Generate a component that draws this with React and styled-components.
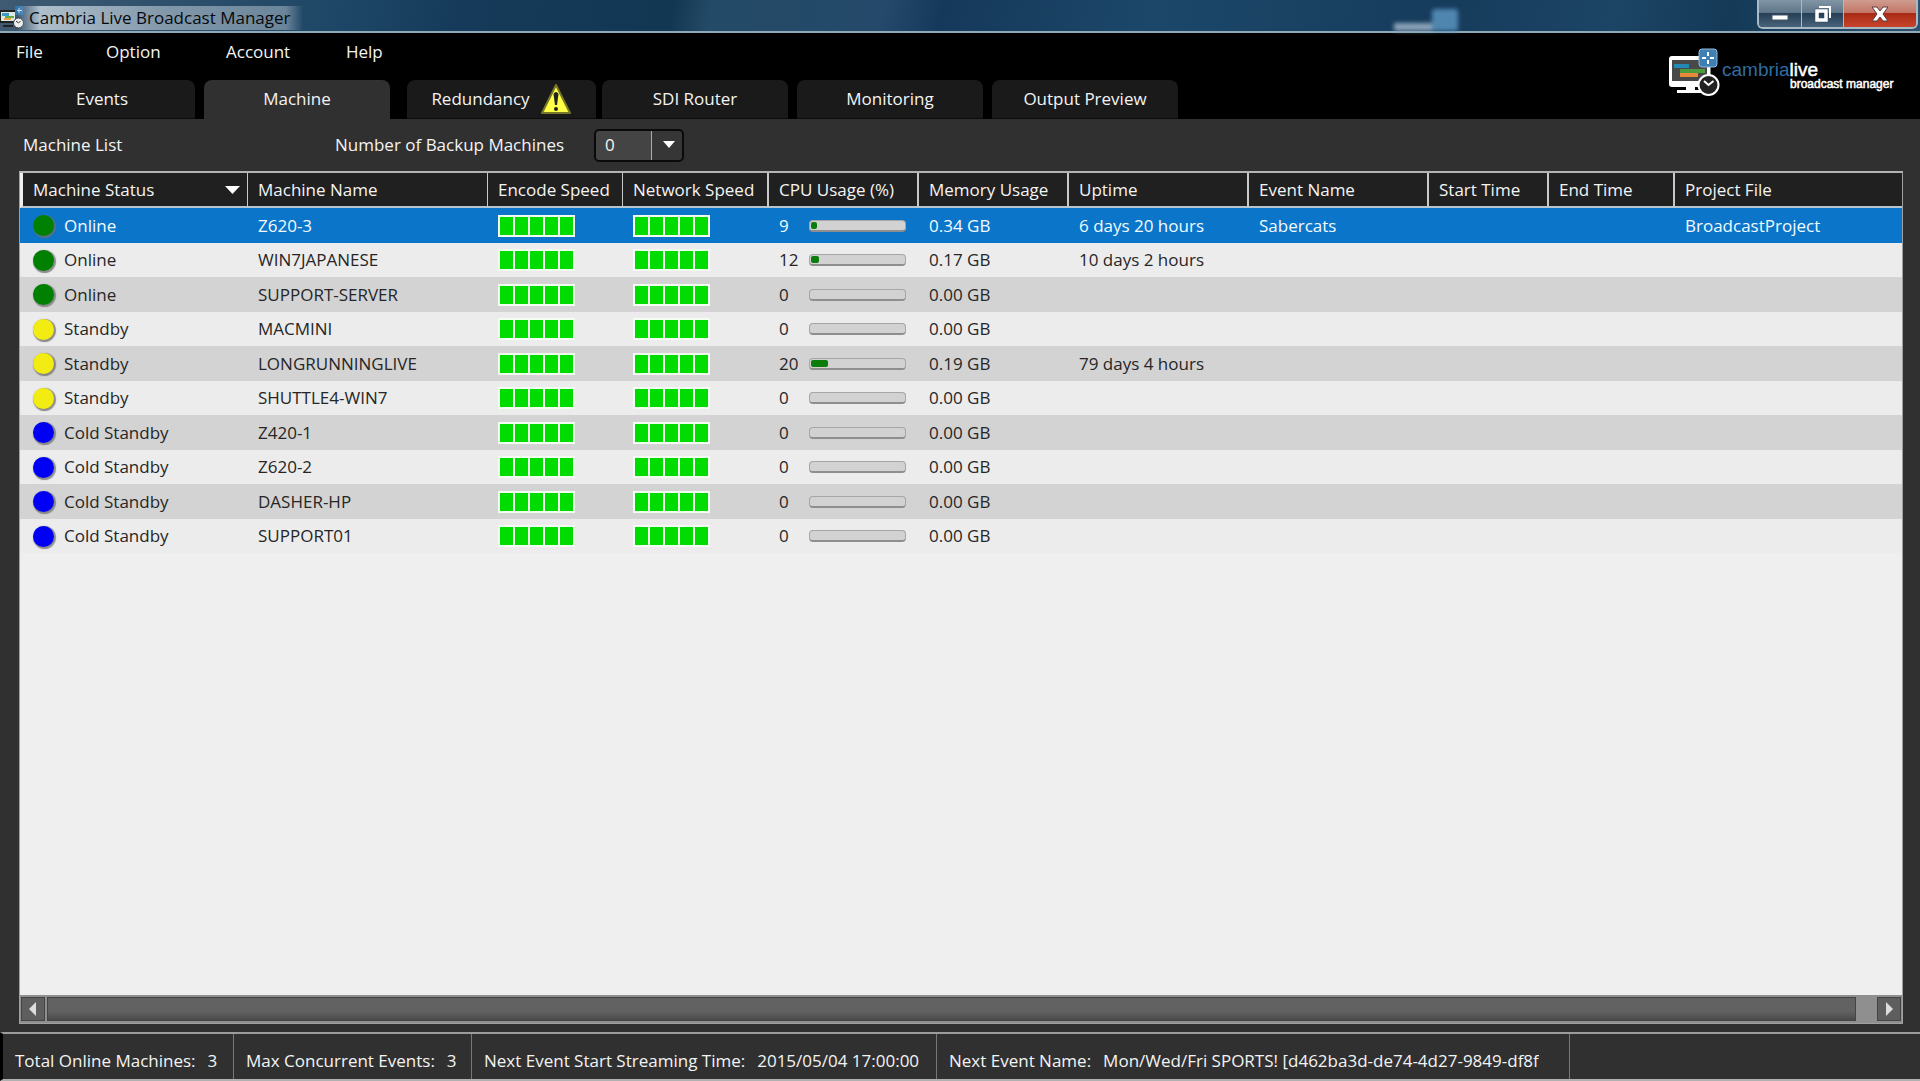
import React from "react";
import styled, { createGlobalStyle, css } from "styled-components";

const Global = createGlobalStyle`
  * { box-sizing: border-box; }
  body {
    margin: 0;
    background: #303030;
    color: #f4f4f4;
    font-family: "Open Sans", "Noto Sans", sans-serif;
    font-size: 17px;
    line-height: 24px;
  }
  button, select { font: inherit; color: inherit; }
`;

const Window = styled.div`
  min-height: 100vh;
  display: flex;
  flex-direction: column;
  overflow: hidden;
`;

/* ---------- title bar ---------- */

const TitleBar = styled.header`
  position: relative;
  display: flex;
  justify-content: space-between;
  height: 33px;
  border-bottom: 2px solid #8fa9b8;
  background: linear-gradient(100deg, #3f5a72 0, #1d4666 18%, #163b5a 24%, #123753 35%, #234a66 37%, #24496a 46%, #15395a 49%, #1c4769 60%, #163c5c 75%, #1c4464 84%, #143a58 90%, #2c5270 100%);
`;

const TitleText = styled.div`
  display: flex;
  align-items: center;
  gap: 5px;
  padding-top: 4px;
  color: #05090d;
`;

const Glow = styled.span`
  margin: 0 -12px;
  padding: 0 12px;
  background: linear-gradient(90deg, rgba(214, 226, 234, 0) 0, rgba(214, 226, 234, 0.75) 8%, rgba(160, 178, 192, 0.75) 50%, rgba(130, 152, 170, 0.75) 94%, rgba(130, 152, 170, 0) 100%);
`;

const GlassReflection = styled.svg`
  position: absolute;
  left: 72.4%;
  bottom: 0;
  filter: blur(2px);
`;

const WindowButtons = styled.div`
  display: flex;
  height: 29px;
  margin-right: 2px;
  border: 2px solid #a9bac6;
  border-top: 0;
  border-radius: 0 0 6px 6px;
  overflow: hidden;
`;

const WindowButton = styled.button`
  display: flex;
  align-items: center;
  justify-content: center;
  width: ${(p) => (p.$close ? 73 : 42)}px;
  padding: 0;
  border: 0;
  border-left: ${(p) => (p.$first ? "0" : "1px solid #a9bac6")};
  background: ${(p) =>
    p.$close
      ? "linear-gradient(#cf9c90 0, #c27565 48%, #a82a15 50%, #c8452c 100%)"
      : "linear-gradient(#8195a5 0, #5f7689 48%, #243f56 50%, #49647a 100%)"};
`;

/* ---------- menu, tabs, brand ---------- */

const TopArea = styled.div`
  display: flex;
  justify-content: space-between;
  height: 86px;
  background: #000;
`;

const Nav = styled.div`
  display: flex;
  flex-direction: column;
  justify-content: space-between;
`;

const MenuBar = styled.nav`
  display: flex;
  padding: 7px 0 0 16px;
`;

const MenuButton = styled.button`
  width: ${(p) => p.$width}px;
  padding: 0;
  border: 0;
  background: none;
  text-align: left;
`;

const TabList = styled.div`
  display: flex;
  gap: 9px;
  padding-left: 9px;
`;

const Tab = styled.button`
  display: flex;
  align-items: center;
  justify-content: center;
  gap: 10px;
  width: 186px;
  height: 39px;
  padding: 0;
  border: 0;
  border-bottom: 1px solid #0c0c0c;
  border-radius: 8px 8px 0 0;
  background: #1a1a1a;
  ${(p) => p.$active && css`background: #303030; border-bottom-color: #303030;`}
  ${(p) => p.$alert && css`width: 189px; margin: 0 -3px 0 8px;`}
`;

const Brand = styled.div`
  display: flex;
  gap: 2px;
  width: 252px;
  padding-top: 14px;
  font-family: "Liberation Sans", Arial, sans-serif;
`;

const BrandText = styled.div`
  display: flex;
  flex-direction: column;
  padding-top: 15px;
`;

const BrandName = styled.div`
  font-size: 19px;
  line-height: 16px;
  color: #2f6da3;
  span { color: #fff; -webkit-text-stroke: 0.5px #fff; }
`;

const BrandSub = styled.div`
  padding-left: 68px;
  font-size: 12px;
  line-height: 12px;
  white-space: nowrap;
  color: #fff;
  -webkit-text-stroke: 0.5px #fff;
`;

/* ---------- machine panel ---------- */

const Panel = styled.main`
  flex: 1;
  display: flex;
  flex-direction: column;
  padding: 9px 17px 8px 19px;
`;

const Toolbar = styled.div`
  display: flex;
  align-items: center;
  height: 34px;
  margin-bottom: 9px;
  padding-left: 4px;
`;

const PanelTitle = styled.h1`
  width: 312px;
  margin: 0;
  font-size: 17px;
  font-weight: 400;
`;

const BackupLabel = styled.label`
  width: 259px;
`;

const SelectBox = styled.div`
  position: relative;
  display: grid;
  width: 90px;
  height: 33px;
`;

const Select = styled.select`
  appearance: none;
  padding: 0 9px;
  border: 2px solid #0a0a0a;
  border-radius: 5px;
  background: linear-gradient(90deg, #444 0 55px, #aaa 55px 56px, #363636 56px);
`;

const SelectArrow = styled.svg`
  position: absolute;
  right: 9px;
  top: 12px;
  pointer-events: none;
`;

const Grid = styled.section`
  flex: 1;
  display: flex;
  flex-direction: column;
  border: 1px solid #a0a0a0;
  border-top: 2px solid #b4b4b4;
  background: #efefef;
`;

const TableArea = styled.div`
  flex: 1;
  overflow: hidden;
`;

const Table = styled.table`
  width: 100%;
  table-layout: fixed;
  border-collapse: separate;
  border-spacing: 0;
`;

const HeadCell = styled.th`
  height: 35px;
  padding: 0 0 0 10px;
  border-bottom: 2px solid #b8c4cc;
  border-right: ${(p) => (p.$last ? 0 : p.$thin ? 1 : 2)}px solid #c8c8c8;
  border-left: ${(p) => (p.$first ? "3px solid #eee" : "0")};
  background: #202020;
  font-weight: 400;
  text-align: left;
  white-space: nowrap;
`;

const HeadContent = styled.div`
  display: flex;
  align-items: center;
  justify-content: space-between;
  padding-right: 7px;
`;

const Row = styled.tr`
  height: 34px;
  background: #ececec;
  color: #262626;
  &:nth-child(odd) { height: 35px; background: #d3d3d3; }
  &&[aria-selected="true"] { background: #0a75c9; color: #f2fbff; }
`;

const Cell = styled.td`
  padding: 0 0 0 ${(p) => (p.$first ? 13 : 10)}px;
  white-space: nowrap;
`;

const Inline = styled.div`
  display: flex;
  align-items: center;
`;

const StatusDot = styled.span`
  width: 21px;
  height: 21px;
  margin-right: 10px;
  border-radius: 50%;
  background: ${(p) => p.$color};
  box-shadow: 1px 1px 1px 1px rgba(110, 110, 110, 0.75);
`;

const Speed = styled.div`
  display: grid;
  grid-template-columns: repeat(5, 13px);
  gap: 2px;
  width: 77px;
  height: 22px;
  padding: 2px;
  background: #f2fff0;
`;

const SpeedCell = styled.span`
  background: #00dc00;
`;

const CpuValue = styled.span`
  width: 30px;
`;

const CpuTrack = styled.div`
  width: 97px;
  height: 12px;
  padding: 1px;
  border: 1px solid #a6a6a6;
  border-bottom: 2px solid #8e8e8e;
  border-radius: 4px;
  background: #d2d2d2;
`;

const CpuFill = styled.div`
  height: 100%;
  border-radius: 2px;
  background: #0a7d0a;
`;

const ScrollBar = styled.div`
  display: flex;
  gap: 2px;
  height: 28px;
  padding: 2px 1px;
  background: #8f8f8f;
`;

const ScrollButton = styled.button`
  display: flex;
  align-items: center;
  justify-content: center;
  width: 24px;
  padding: 0;
  border: 1px solid #444;
  background: #5e5e5e;
`;

const ScrollTrack = styled.div`
  flex: 1;
  padding-right: 19px;
`;

const ScrollThumb = styled.div`
  height: 100%;
  border: 1px solid #444;
  background: linear-gradient(#626262 0 60%, #4a4a4a);
`;

/* ---------- status bar ---------- */

const StatusBar = styled.footer`
  display: flex;
  height: 49px;
  border-top: 2px solid #9c9c9c;
  border-bottom: 2px solid #b0b0b0;
  border-left: 3px solid #000;
`;

const StatusItem = styled.div`
  display: flex;
  align-items: center;
  gap: 12px;
  width: ${(p) => p.$width}px;
  padding: 8px 15px 0 12px;
  border-right: 1px solid #777;
  white-space: nowrap;
`;

const StatusValue = styled.span`
  overflow: hidden;
`;

/* ---------- drawings ---------- */

const Monitor = ({ size }) => (
  <svg width={size} height={size} viewBox="0 0 52 52" aria-hidden="true">
    <path d="M9 46h26v-3h-8v-4H18v4H9z" fill="#fff" />
    <rect x="1" y="9" width="41" height="31" rx="3" fill="#fff" />
    <rect x="4" y="13" width="35" height="21" fill="#484848" />
    <rect x="6" y="17" width="15" height="4" fill="#2388b5" />
    <rect x="12" y="22" width="25" height="4" fill="#4d9b3f" />
    <rect x="12" y="26" width="18" height="4" fill="#e8893a" />
    <path d="M41 20v8" stroke="#fff" strokeWidth="3" />
    <rect x="31" y="2" width="18" height="18" rx="3" fill="#3f80b4" stroke="#8fb9d8" />
    <path d="M40 5v4M40 13v4M34 11h4M42 11h4" stroke="#fff" strokeWidth="2" />
    <circle cx="40.500" cy="38" r="10" fill="#222" stroke="#fff" strokeWidth="2" />
    <path d="M36 34l4.500 4 5-4" stroke="#fff" strokeWidth="2" fill="none" />
  </svg>
);

const AppIcon = () => (
  <svg width="24" height="26" viewBox="0 0 24 26" aria-hidden="true">
    <path d="M0 5h15v13H0z" fill="#222" />
    <path d="M1 7h14v9H1z" fill="#dfe9e4" />
    <path d="M2 8h7v3H2z" fill="#3c9ac6" />
    <path d="M5 11h9v2H5z" fill="#5fae4b" />
    <path d="M4 13h7v2H4z" fill="#e9a24c" />
    <path d="M3 20h10v2H3z" fill="#222" />
    <rect x="15" y="1" width="8" height="9" rx="1" fill="#2f76ad" />
    <path d="M19 3v5M17 5.500h5" stroke="#cde" />
    <circle cx="18.500" cy="18" r="5" fill="#eee" stroke="#333" />
    <path d="M16 16l2.500 2 2-2" stroke="#333" fill="none" />
  </svg>
);

const Warning = () => (
  <svg width="32" height="34" viewBox="0 0 32 34" aria-hidden="true">
    <path d="M16 3L30 31H2z" fill="#ffff45" stroke="#77772a" strokeWidth="2" strokeLinejoin="round" />
    <path d="M13.500 12q2.500-4 5 0L17 23h-2z" fill="#222" />
    <circle cx="16" cy="27" r="2" fill="#222" />
  </svg>
);

const Triangle = ({ points, width, height, fill = "#fff" }) => (
  <svg width={width} height={height} aria-hidden="true">
    <polygon points={points} fill={fill} />
  </svg>
);

/* ---------- data ---------- */

const MENUS = [["File", 90], ["Option", 120], ["Account", 120], ["Help", 60]];
const TABS = ["Events", "Machine", "Redundancy", "SDI Router", "Monitoring", "Output Preview"];
const COLUMNS = [
  ["Machine Status", 228], ["Machine Name", 240], ["Encode Speed", 135], ["Network Speed", 146],
  ["CPU Usage (%)", 150], ["Memory Usage", 150], ["Uptime", 180], ["Event Name", 180],
  ["Start Time", 120], ["End Time", 126], ["Project File", null],
];
const DOTS = { Online: "#008000", Standby: "#f2ec12", "Cold Standby": "#0000f5" };
const MACHINES = [
  { status: "Online", name: "Z620-3", cpu: 9, fill: 6, memory: "0.34 GB", uptime: "6 days 20 hours", event: "Sabercats", project: "BroadcastProject" },
  { status: "Online", name: "WIN7JAPANESE", cpu: 12, fill: 9, memory: "0.17 GB", uptime: "10 days 2 hours" },
  { status: "Online", name: "SUPPORT-SERVER", cpu: 0, memory: "0.00 GB" },
  { status: "Standby", name: "MACMINI", cpu: 0, memory: "0.00 GB" },
  { status: "Standby", name: "LONGRUNNINGLIVE", cpu: 20, fill: 18, memory: "0.19 GB", uptime: "79 days 4 hours" },
  { status: "Standby", name: "SHUTTLE4-WIN7", cpu: 0, memory: "0.00 GB" },
  { status: "Cold Standby", name: "Z420-1", cpu: 0, memory: "0.00 GB" },
  { status: "Cold Standby", name: "Z620-2", cpu: 0, memory: "0.00 GB" },
  { status: "Cold Standby", name: "DASHER-HP", cpu: 0, memory: "0.00 GB" },
  { status: "Cold Standby", name: "SUPPORT01", cpu: 0, memory: "0.00 GB" },
];
const STATUS = [
  ["Total Online Machines:", "3", 231],
  ["Max Concurrent Events:", "3", 238],
  ["Next Event Start Streaming Time:", "2015/05/04 17:00:00", 465],
  ["Next Event Name:", "Mon/Wed/Fri SPORTS! [d462ba3d-de74-4d27-9849-df8f", 633],
];

const SpeedMeter = () => (
  <Speed>
    {[0, 1, 2, 3, 4].map((i) => <SpeedCell key={i} />)}
  </Speed>
);

const MachineRow = ({ machine, selected }) => (
  <Row aria-selected={selected}>
    <Cell $first>
      <Inline><StatusDot $color={DOTS[machine.status]} />{machine.status}</Inline>
    </Cell>
    <Cell>{machine.name}</Cell>
    <Cell><SpeedMeter /></Cell>
    <Cell><SpeedMeter /></Cell>
    <Cell>
      <Inline>
        <CpuValue>{machine.cpu}</CpuValue>
        <CpuTrack><CpuFill style={{ width: `${machine.fill || 0}%` }} /></CpuTrack>
      </Inline>
    </Cell>
    <Cell>{machine.memory}</Cell>
    <Cell>{machine.uptime}</Cell>
    <Cell>{machine.event}</Cell>
    <Cell />
    <Cell />
    <Cell>{machine.project}</Cell>
  </Row>
);

export default function App() {
  return (
    <Window>
      <Global />
      <TitleBar>
        <TitleText><AppIcon /><Glow>Cambria Live Broadcast Manager</Glow></TitleText>
        <GlassReflection width="70" height="24" aria-hidden="true">
          <rect x="4" y="16" width="44" height="8" fill="#8aa3b8" />
          <rect x="42" y="2" width="26" height="22" rx="3" fill="#4f86b0" />
        </GlassReflection>
        <WindowButtons>
          <WindowButton $first aria-label="Minimize">
            <svg width="18" height="16"><rect x="1" y="9" width="16" height="5" fill="#fff" stroke="#456" /></svg>
          </WindowButton>
          <WindowButton aria-label="Restore">
            <svg width="20" height="18">
              <path d="M6 1h12v12h-2V3H6z" fill="#fff" />
              <path d="M2 4h13v13H2zM6 8v5h5V8z" fill="#fff" fillRule="evenodd" stroke="#345" strokeWidth=".5" />
            </svg>
          </WindowButton>
          <WindowButton $close aria-label="Close">
            <svg width="20" height="18">
              <path d="M2 2h5l3 4 3-4h5l-5 7 5 7h-5l-3-4-3 4H2l5-7z" fill="#fff" stroke="#5a3a3a" />
            </svg>
          </WindowButton>
        </WindowButtons>
      </TitleBar>

      <TopArea>
        <Nav>
          <MenuBar>
            {MENUS.map(([label, width]) => <MenuButton key={label} $width={width}>{label}</MenuButton>)}
          </MenuBar>
          <TabList role="tablist">
            {TABS.map((label) => (
              <Tab key={label} role="tab" aria-selected={label === "Machine"} $active={label === "Machine"} $alert={label === "Redundancy"}>
                {label}
                {label === "Redundancy" && <Warning />}
              </Tab>
            ))}
          </TabList>
        </Nav>
        <Brand>
          <Monitor size={52} />
          <BrandText>
            <BrandName>cambria<span>live</span></BrandName>
            <BrandSub>broadcast manager</BrandSub>
          </BrandText>
        </Brand>
      </TopArea>

      <Panel>
        <Toolbar>
          <PanelTitle>Machine List</PanelTitle>
          <BackupLabel htmlFor="backup">Number of Backup Machines</BackupLabel>
          <SelectBox>
            <Select id="backup" defaultValue="0">
              <option>0</option>
              <option>1</option>
              <option>2</option>
            </Select>
            <SelectArrow width="12" height="8" aria-hidden="true"><polygon points="0,0 12,0 6,7" fill="#fff" /></SelectArrow>
          </SelectBox>
        </Toolbar>

        <Grid>
          <TableArea>
            <Table>
              <colgroup>
                {COLUMNS.map(([label, width]) => <col key={label} width={width || undefined} />)}
              </colgroup>
              <thead>
                <tr>
                  {COLUMNS.map(([label], i) => (
                    <HeadCell key={label} $first={i === 0} $thin={i < 3} $last={i === COLUMNS.length - 1}>
                      {i === 0 ? (
                        <HeadContent>{label}<Triangle points="0,0 15,0 7.5,8" width={15} height={8} /></HeadContent>
                      ) : label}
                    </HeadCell>
                  ))}
                </tr>
              </thead>
              <tbody>
                {MACHINES.map((m, i) => <MachineRow key={m.name} machine={m} selected={i === 0} />)}
              </tbody>
            </Table>
          </TableArea>
          <ScrollBar>
            <ScrollButton aria-label="Scroll left"><Triangle points="7,0 7,14 0,7" width={8} height={14} fill="#ddd" /></ScrollButton>
            <ScrollTrack><ScrollThumb /></ScrollTrack>
            <ScrollButton aria-label="Scroll right"><Triangle points="1,0 1,14 8,7" width={8} height={14} fill="#ddd" /></ScrollButton>
          </ScrollBar>
        </Grid>
      </Panel>

      <StatusBar>
        {STATUS.map(([label, value, width]) => (
          <StatusItem key={label} $width={width}>
            <span>{label}</span>
            <StatusValue>{value}</StatusValue>
          </StatusItem>
        ))}
      </StatusBar>
    </Window>
  );
}
